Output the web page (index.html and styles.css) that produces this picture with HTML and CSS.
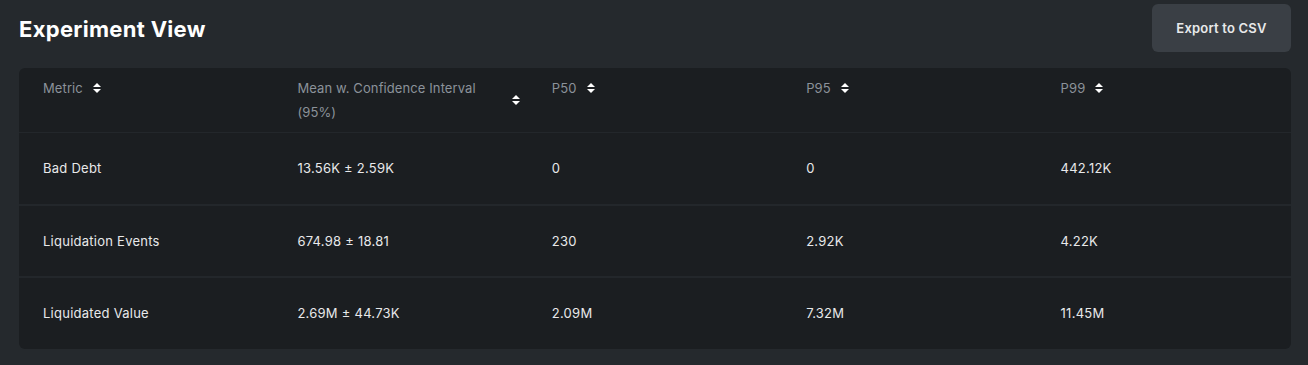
FILE: index.html
```html
<!DOCTYPE html>
<html lang="en">
<head>
<meta charset="utf-8">
<title>Experiment View</title>
<link rel="stylesheet" href="styles.css">
</head>
<body>
<div class="page">
  <header class="topbar">
    <h1 class="title">Experiment View</h1>
    <button class="btn">Export to CSV</button>
  </header>
  <div class="card">
    <table class="tbl">
      <thead>
        <tr>
          <th><div class="th"><span>Metric</span><svg class="sort" viewBox="0 0 8 10"><path d="M4 0L8 4H0Z M0 6H8L4 10Z"/></svg></div></th>
          <th><div class="th"><span>Mean w. Confidence Interval (95%)</span><svg class="sort" viewBox="0 0 8 10"><path d="M4 0L8 4H0Z M0 6H8L4 10Z"/></svg></div></th>
          <th><div class="th"><span>P50</span><svg class="sort" viewBox="0 0 8 10"><path d="M4 0L8 4H0Z M0 6H8L4 10Z"/></svg></div></th>
          <th><div class="th"><span>P95</span><svg class="sort" viewBox="0 0 8 10"><path d="M4 0L8 4H0Z M0 6H8L4 10Z"/></svg></div></th>
          <th><div class="th"><span>P99</span><svg class="sort" viewBox="0 0 8 10"><path d="M4 0L8 4H0Z M0 6H8L4 10Z"/></svg></div></th>
        </tr>
      </thead>
      <tbody>
        <tr><td>Bad Debt</td><td>13.56K ± 2.59K</td><td>0</td><td>0</td><td>442.12K</td></tr>
        <tr><td>Liquidation Events</td><td>674.98 ± 18.81</td><td>230</td><td>2.92K</td><td>4.22K</td></tr>
        <tr><td>Liquidated Value</td><td>2.69M ± 44.73K</td><td>2.09M</td><td>7.32M</td><td>11.45M</td></tr>
      </tbody>
    </table>
  </div>
</div>
</body>
</html>
```
FILE: styles.css
```css
* { box-sizing: border-box; }
html, body { margin: 0; padding: 0; }
body {
  background: #25292d;
  font-family: Inter, "Liberation Sans", Arial, sans-serif;
  color: #e8e9ea;
}
.page { padding: 4px 17px 0 19px; }
.topbar {
  display: flex;
  justify-content: space-between;
  align-items: flex-start;
  height: 64px;
}
.title {
  margin: 12px 0 0;
  font-size: 22px;
  font-weight: 700;
  color: #ffffff;
  letter-spacing: 0.3px;
}
.btn {
  width: 139px;
  height: 48px;
  border: none;
  border-radius: 6px;
  background: #3a3f45;
  color: #e8e9ea;
  font-family: inherit;
  font-size: 13px;
  font-weight: 600;
  letter-spacing: 0.2px;
}
.card {
  background: #1b1e21;
  border-radius: 6px;
  overflow: hidden;
}
.tbl {
  width: 100%;
  border-collapse: collapse;
  table-layout: fixed;
  font-size: 13px;
}
.tbl th {
  height: 64px;
  padding: 8px 8px 8px 24px;
  text-align: left;
  font-weight: 400;
  color: #8b929a;
  line-height: 24px;
  vertical-align: top;
  letter-spacing: 0.1px;
}
.th { display: flex; align-items: center; }
.sort { width: 8px; height: 10px; margin-left: 10px; flex: none; fill: #ffffff; }
.tbl td {
  height: 72px;
  padding: 0 8px 0 24px;
  border-top: 2px solid #23272b;
  color: #e8e9ea;
  vertical-align: middle;
  letter-spacing: 0.25px;
}
.tbl tbody tr:first-child td { border-top-width: 1px; }
```
